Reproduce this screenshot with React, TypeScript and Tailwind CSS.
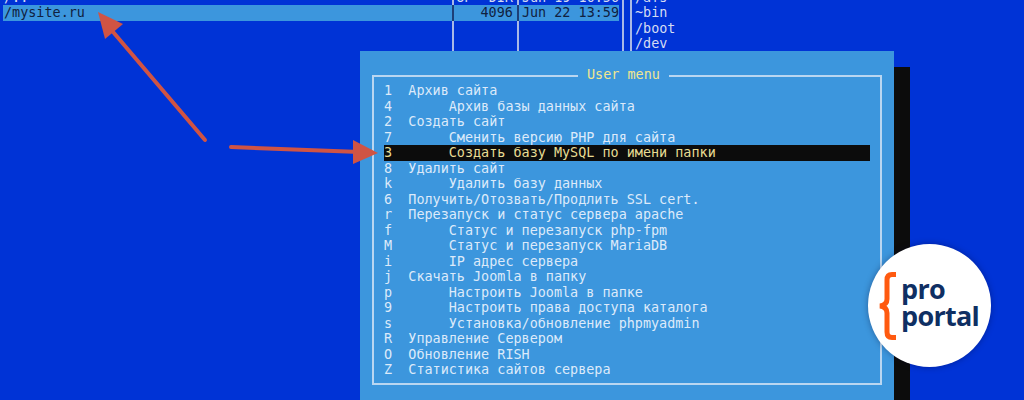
const mono = "font-['DejaVu_Sans_Mono',monospace]"

const menu: [string, string, boolean?][] = [
  ['1', 'Архив сайта'],
  ['4', '     Архив базы данных сайта'],
  ['2', 'Создать сайт'],
  ['7', '     Сменить версию PHP для сайта'],
  ['3', '     Создать базу MySQL по имени папки', true],
  ['8', 'Удалить сайт'],
  ['k', '     Удалить базу данных'],
  ['6', 'Получить/Отозвать/Продлить SSL cert.'],
  ['r', 'Перезапуск и статус сервера apache'],
  ['f', '     Статус и перезапуск php-fpm'],
  ['M', '     Статус и перезапуск MariaDB'],
  ['i', '     IP адрес сервера'],
  ['j', 'Скачать Joomla в папку'],
  ['p', '     Настроить Joomla в папке'],
  ['9', '     Настроить права доступа каталога'],
  ['s', '     Установка/обновление phpmyadmin'],
  ['R', 'Управление Сервером'],
  ['O', 'Обновление RISH'],
  ['Z', 'Статистика сайтов сервера'],
]

function PanelRow({ name, size, date, right, active }: { name: string; size: string; date: string; right: string; active?: boolean }) {
  return (
    <div className="flex h-[15.5px] leading-[15.5px]">
      <div className={`flex w-[616px] ${active ? 'bg-[#3c96dd] text-[#10213f]' : 'text-[#d5dcf2]'}`}>
        <div className="w-[449px] pl-px">{name}</div>
        <div className={`w-[65px] border-l-2 pr-1 text-right ${active ? 'border-[#1d3f78]' : 'border-[#a9b9e6]'}`}>{size}</div>
        <div className={`flex-1 border-l-2 pl-[3px] whitespace-nowrap ${active ? 'border-[#1d3f78]' : 'border-[#a9b9e6]'}`}>{date}</div>
      </div>
      <div className="ml-[3px] w-[10px] border-x-2 border-[#a9b9e6]" />
      <div className="pl-[3px] text-[#d5dcf2]">{right}</div>
    </div>
  )
}

export default function App() {
  return (
    <div className={`relative h-[400px] w-[1024px] overflow-hidden bg-[#0033d6] text-[13.45px] ${mono}`}>
      {/* mc panels, the first row is cut by the top edge */}
      <div className="-mt-[10.5px] pl-[3px]">
        <PanelRow name="/.." size="UP--DIR" date="Jun 19 10:56" right="/afs" />
        <PanelRow name="/mysite.ru" size="4096" date="Jun 22 13:59" right="~bin" active />
        <PanelRow name="" size="" date="" right="/boot" />
        <PanelRow name="" size="" date="" right="/dev" />
      </div>

      {/* user menu dialog */}
      <div className="absolute left-[360px] top-[51px] h-[349px] w-[534px] bg-[#3c96dd] px-3 pt-6 shadow-[16px_16px_0_0_#0c0c0c]">
        <div className="relative h-[310px] border-2 border-[#b9d6f1] pt-[6px] text-[#dceafa]">
          <div className="absolute -top-[11px] left-[204px] bg-[#3c96dd] px-[9px] leading-[18px] text-[#f1e68f]">User menu</div>
          {menu.map(([key, label, selected]) => (
            <div
              key={key}
              className={`mx-[10px] flex h-[15.5px] whitespace-pre leading-[15.5px] ${selected ? 'bg-[#0c0c0c] text-[#e8dc94]' : ''}`}
            >
              <span className="w-[24.3px]">{key}</span>
              <span>{label}</span>
            </div>
          ))}
        </div>
      </div>

      {/* red arrows */}
      <svg className="absolute inset-0" width="1024" height="400" viewBox="0 0 1024 400">
        <line x1="205" y1="140" x2="108" y2="26" stroke="#d05444" strokeWidth="4" strokeLinecap="round" />
        <polygon points="98,12 123,24 105,39" fill="#d05444" />
        <line x1="231" y1="147" x2="360" y2="152" stroke="#d05444" strokeWidth="4" strokeLinecap="round" />
        <polygon points="378,153 353,140 353,164" fill="#d05444" />
      </svg>

      {/* logo badge */}
      <div className="absolute left-[868px] top-[244px] flex h-[123px] w-[123px] items-center rounded-full bg-white pl-[10px] shadow-[0_0_6px_rgba(0,0,40,0.35)]">
        <svg width="20" height="68" viewBox="0 0 20 68">
          <path d="M18 2.5 H14 Q9 2.5 9 8 V27 Q9 33 2 34 Q9 35 9 41 V60 Q9 65.5 14 65.5 H18" fill="none" stroke="#ff5a10" strokeWidth="5" />
        </svg>
        <div className="-mt-[8px] ml-[3px] font-['Open_Sans',sans-serif] text-[27px] font-bold leading-[27px] tracking-[-0.7px] text-[#0f2f63]">
          <div>pro</div>
          <div>portal</div>
        </div>
      </div>
    </div>
  )
}
